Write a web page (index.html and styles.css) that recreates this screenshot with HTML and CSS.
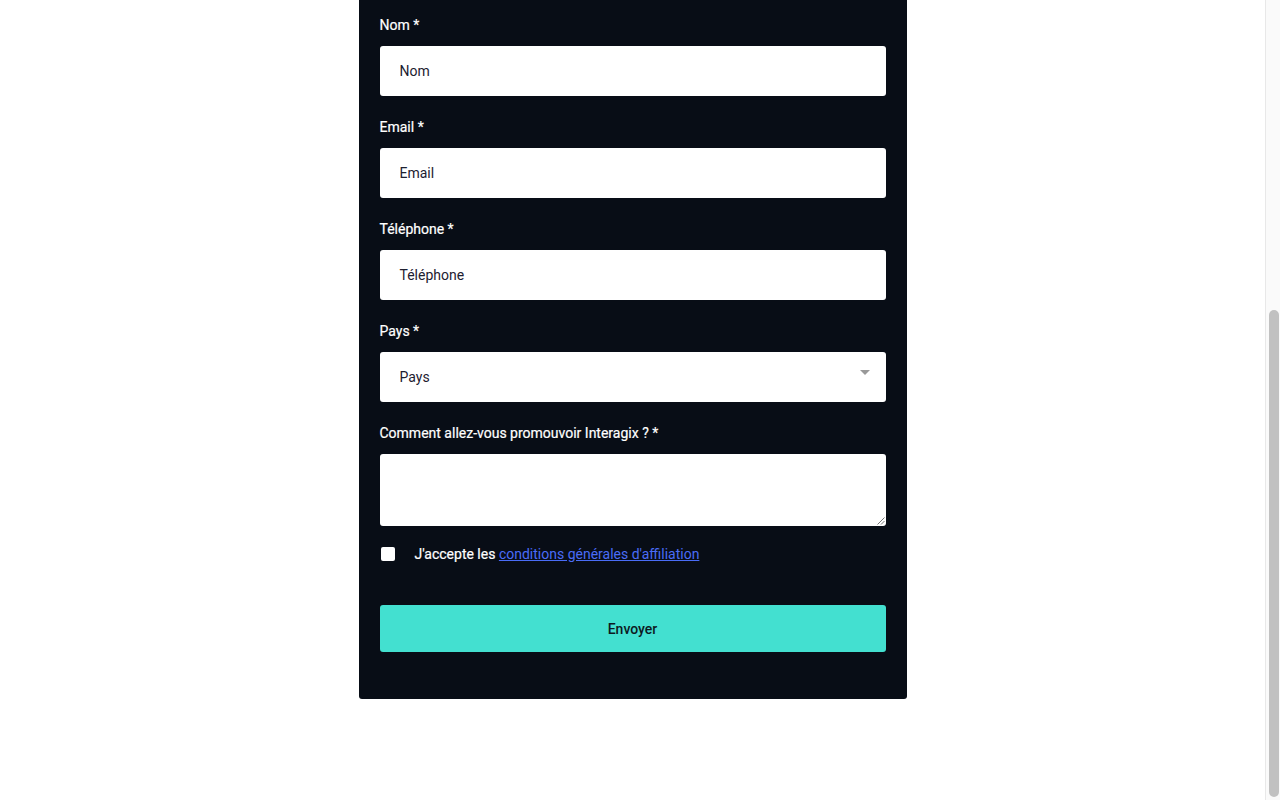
FILE: index.html
```html
<!DOCTYPE html>
<html lang="fr">
<head>
<meta charset="utf-8">
<title>Affiliation</title>
<link rel="stylesheet" href="styles.css">
</head>
<body>
<div class="page">
  <main class="content">
    <form class="card">
      <div class="field">
        <label class="label">Nom *</label>
        <div class="input"><span>Nom</span></div>
      </div>
      <div class="field">
        <label class="label">Email *</label>
        <div class="input"><span>Email</span></div>
      </div>
      <div class="field">
        <label class="label">Téléphone *</label>
        <div class="input"><span>Téléphone</span></div>
      </div>
      <div class="field">
        <label class="label">Pays *</label>
        <div class="input select"><span>Pays</span><span class="arrow"></span></div>
      </div>
      <div class="field">
        <label class="label">Comment allez-vous promouvoir Interagix ? *</label>
        <div class="textarea">
          <svg class="grip" width="9" height="9" viewBox="0 0 9 9"><path d="M8.5 1.5 L1.5 8.5 M8.5 5 L5 8.5" stroke="#777" stroke-width="1" fill="none"/></svg>
        </div>
      </div>
      <div class="check-row">
        <span class="checkbox"></span>
        <span class="check-text">J'accepte les <a href="#" class="link">conditions générales d'affiliation</a></span>
      </div>
      <div class="btn">Envoyer</div>
    </form>
  </main>
  <div class="scrollbar"><div class="thumb"></div></div>
</div>
</body>
</html>
```
FILE: styles.css
```css
* { box-sizing: border-box; }
html, body { margin: 0; padding: 0; background: #ffffff; }
body {
  font-family: Roboto, "Noto Sans", "Liberation Sans", sans-serif;
  height: 800px;
  overflow: hidden;
}
.page {
  display: flex;
  height: 800px;
}
.content {
  flex: 1;
  display: flex;
  justify-content: center;
  align-items: flex-start;
}
.card {
  width: 548px;
  background: #080d16;
  border-radius: 0 0 3px 3px;
  padding: 15px 21px 47px 21px;
  display: flex;
  flex-direction: column;
}
.field {
  display: flex;
  flex-direction: column;
  margin-bottom: 21px;
}
.label {
  color: #ffffff;
  font-size: 14px;
  font-weight: 400;
  line-height: 20px;
  margin-bottom: 11px;
  -webkit-text-stroke: 0.2px #ffffff;
}
.input {
  height: 50px;
  background: #ffffff;
  border-radius: 3px;
  padding: 0 20px;
  display: flex;
  align-items: center;
  justify-content: space-between;
  color: #1d2030;
  font-size: 14px;
}
.arrow {
  width: 0;
  height: 0;
  border-left: 5px solid transparent;
  border-right: 5px solid transparent;
  border-top: 5px solid #999999;
  margin-right: -4px;
  margin-top: -9px;
}
.textarea {
  height: 72px;
  background: #ffffff;
  border-radius: 3px;
  position: relative;
}
.grip {
  position: absolute;
  right: 1px;
  bottom: 1px;
}
.check-row {
  display: flex;
  align-items: center;
  margin-top: -3px;
  height: 20px;
  margin-bottom: 41px;
}
.checkbox {
  width: 14px;
  height: 14px;
  background: #ffffff;
  border-radius: 2px;
  margin-left: 1px;
  margin-right: 20px;
}
.check-text {
  color: #ffffff;
  font-size: 14px;
  font-weight: 400;
  -webkit-text-stroke: 0.2px #ffffff;
}
.link {
  color: #4a6cf7;
  font-weight: 400;
  text-decoration: underline;
  -webkit-text-stroke: 0;
}
.btn {
  height: 47px;
  background: #43e0d0;
  border-radius: 3px;
  display: flex;
  align-items: center;
  justify-content: center;
  color: #0d1a22;
  font-size: 14px;
  font-weight: 500;
}
.scrollbar {
  width: 15px;
  height: 800px;
  background: #fafafa;
  border-left: 1px solid #e8e8e8;
  padding: 310px 2px 3px 2px;
}
.thumb {
  height: 100%;
  width: 10px;
  margin-left: 1px;
  background: #c1c1c1;
  border-radius: 5px;
}
```
